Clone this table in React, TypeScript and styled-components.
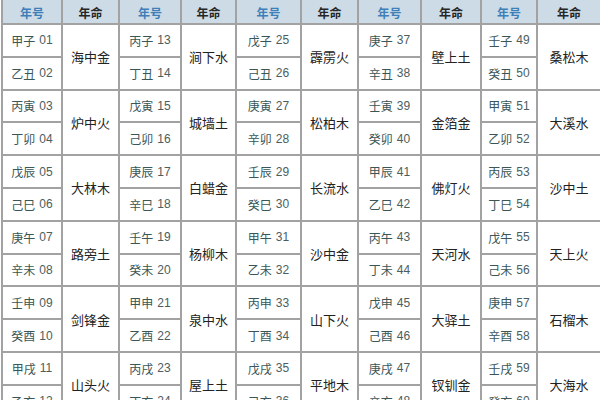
import React from "react";
import styled, { createGlobalStyle } from "styled-components";

const Global = createGlobalStyle`
  html, body { margin: 0; padding: 0; background: #ffffff; overflow: hidden; }
  body { font-family: "Noto Sans CJK SC", "Noto Sans", sans-serif; }
`;

const Page = styled.div`
  width: 600px;
  height: 400px;
  overflow: hidden;
  background: #ffffff;
`;

const Grid = styled.div`
  display: grid;
  grid-template-columns: 58px 55px 60px 53px 63px 55px 61px 58px 54px 62px;
  grid-template-rows: 28px;
  grid-auto-rows: 30.8px;
  gap: 2px;
  padding: 2px;
  margin: -7px 0 0 1px;
  width: max-content;
  background: #a2a2a2;
`;

const HeadCell = styled.div<{ $kind: "hao" | "ming" }>`
  display: flex;
  align-items: center;
  justify-content: center;
  background: #cddbe6;
  font-size: 12px;
  font-weight: 700;
  color: ${(p) => (p.$kind === "hao" ? "#3d7fb8" : "#262626")};
  padding-top: 6px;
  box-sizing: border-box;
`;

const YearCell = styled.div`
  display: flex;
  align-items: center;
  justify-content: center;
  background: #ffffff;
  font-size: 12px;
  color: #3a5656;
  white-space: nowrap;
`;

const Num = styled.span`
  margin-left: 4px;
  font-family: "Liberation Sans", "Noto Sans", sans-serif;
  font-size: 12px;
  color: #4a5e60;
`;

const MingCell = styled.div`
  grid-row: span 2;
  display: flex;
  align-items: center;
  justify-content: center;
  background: #ffffff;
  font-size: 13px;
  color: #222222;
  white-space: nowrap;
`;

const ganzhi = [
  "甲子", "乙丑", "丙寅", "丁卯", "戊辰", "己巳", "庚午", "辛未", "壬申", "癸酉", "甲戌", "乙亥",
  "丙子", "丁丑", "戊寅", "己卯", "庚辰", "辛巳", "壬午", "癸未", "甲申", "乙酉", "丙戌", "丁亥",
  "戊子", "己丑", "庚寅", "辛卯", "壬辰", "癸巳", "甲午", "乙未", "丙申", "丁酉", "戊戌", "己亥",
  "庚子", "辛丑", "壬寅", "癸卯", "甲辰", "乙巳", "丙午", "丁未", "戊申", "己酉", "庚戌", "辛亥",
  "壬子", "癸丑", "甲寅", "乙卯", "丙辰", "丁巳", "戊午", "己未", "庚申", "辛酉", "壬戌", "癸亥",
];

const nayin = [
  "海中金", "炉中火", "大林木", "路旁土", "剑锋金", "山头火",
  "涧下水", "城墙土", "白蜡金", "杨柳木", "泉中水", "屋上土",
  "霹雳火", "松柏木", "长流水", "沙中金", "山下火", "平地木",
  "壁上土", "金箔金", "佛灯火", "天河水", "大驿土", "钗钏金",
  "桑松木", "大溪水", "沙中土", "天上火", "石榴木", "大海水",
];

const pad = (n: number) => (n < 10 ? "0" + n : String(n));

export default function App() {
  const cells: React.ReactNode[] = [];
  for (let g = 0; g < 5; g++) {
    cells.push(
      <HeadCell key={`hh${g}`} $kind="hao">年号</HeadCell>,
      <HeadCell key={`hm${g}`} $kind="ming">年命</HeadCell>
    );
  }
  for (let pair = 0; pair < 6; pair++) {
    for (let g = 0; g < 5; g++) {
      const i = g * 12 + pair * 2;
      cells.push(
        <YearCell key={`y${i}`}>
          {ganzhi[i]}
          <Num>{pad(i + 1)}</Num>
        </YearCell>,
        <MingCell key={`m${i}`}>{nayin[g * 6 + pair]}</MingCell>
      );
    }
    for (let g = 0; g < 5; g++) {
      const i = g * 12 + pair * 2 + 1;
      cells.push(
        <YearCell key={`y${i}`}>
          {ganzhi[i]}
          <Num>{pad(i + 1)}</Num>
        </YearCell>
      );
    }
  }
  return (
    <Page>
      <Global />
      <Grid>{cells}</Grid>
    </Page>
  );
}
